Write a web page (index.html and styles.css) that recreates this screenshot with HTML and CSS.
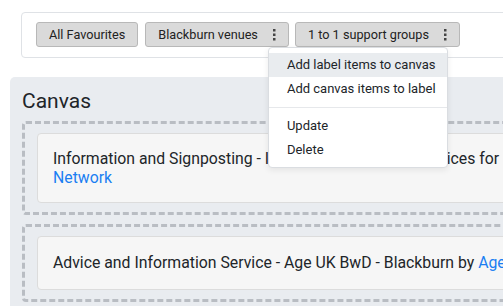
FILE: index.html
```html
<!DOCTYPE html>
<html lang="en">
<head>
  <meta charset="UTF-8" />
  <meta name="viewport" content="width=device-width, initial-scale=1.0"/>
  <title>Labels - Canvas</title>
  <link rel="stylesheet" href="styles.css">
</head>
<body>
  <div class="page">
    <div class="labels-bar">
      <button class="label-btn">All Favourites</button>
      <div class="label-wrap">
        <button class="label-btn">Blackburn venues <span class="kebab"><svg width="4" height="12" viewBox="0 0 4 12"><rect x="1" y="0" width="2.5" height="2.5"/><rect x="1" y="4.5" width="2.5" height="2.5"/><rect x="1" y="9" width="2.5" height="2.5"/></svg></span></button>
      </div>
      <div class="label-wrap">
        <button class="label-btn">1 to 1 support groups <span class="kebab"><svg width="4" height="12" viewBox="0 0 4 12"><rect x="1" y="0" width="2.5" height="2.5"/><rect x="1" y="4.5" width="2.5" height="2.5"/><rect x="1" y="9" width="2.5" height="2.5"/></svg></span></button>
        <ul class="dropdown">
          <li class="active">Add label items to canvas</li>
          <li>Add canvas items to label</li>
          <li class="divider"></li>
          <li>Update</li>
          <li>Delete</li>
        </ul>
      </div>
    </div>

    <section class="canvas">
      <h2>Canvas</h2>
      <div class="drop-zone">
        <div class="item-card">
          Information and Signposting - Information &amp; Advice Services for Blackburn by BwD Community <a href="#">Network</a>
        </div>
      </div>
      <div class="drop-zone">
        <div class="item-card">
          Advice and Information Service - Age UK BwD - Blackburn by <a href="#">Age UK Blackburn with Darwen</a>
        </div>
      </div>
    </section>
  </div>
</body>
</html>
```

FILE: styles.css
```css
* {
  box-sizing: border-box;
}

html, body {
  overflow: hidden;
}

body {
  margin: 0;
  font-family: Roboto, 'Noto Sans', sans-serif;
  color: #212529;
  background: #fff;
}

.page {
  padding: 12px 0 0 10px;
  width: 805px;
}

.labels-bar {
  margin-left: 11px;
  border: 1px solid #dfe2e6;
  border-radius: 4px;
  padding: 9px 14px;
  display: flex;
  gap: 7px;
  height: 46px;
}

.label-wrap {
  position: relative;
}

.label-btn {
  font-family: inherit;
  font-size: 12.7px;
  color: #222;
  background: #dadada;
  border: 1px solid #b8b8b8;
  border-radius: 3px;
  height: 25px;
  padding: 0 12px;
  display: flex;
  align-items: center;
  cursor: pointer;
}

.label-wrap + .label-wrap {
  margin-left: -1px;
}

.kebab {
  display: flex;
  margin-left: 14px;
  fill: #444;
}

.dropdown {
  position: absolute;
  top: 25px;
  left: -27px;
  width: 180px;
  margin: 0;
  padding: 5px 0;
  list-style: none;
  background: #fff;
  border: 1px solid #dadde1;
  border-radius: 4px;
  box-shadow: 0 2px 6px rgba(0, 0, 0, 0.08);
  z-index: 10;
  font-size: 13px;
}

.dropdown li {
  height: 24px;
  line-height: 24px;
  padding: 0 18px;
  white-space: nowrap;
  color: #212529;
}

.dropdown li.active {
  background: #e9ecef;
}

.dropdown li.divider {
  height: 1px;
  margin: 6px 0;
  padding: 0;
  background: #e6e8eb;
}

.canvas {
  margin-top: 19px;
  background: #e9ecf0;
  border-radius: 5px 0 0 0;
  padding: 12px;
  min-height: 240px;
}

.canvas h2 {
  margin: 0 0 8px;
  font-size: 21px;
  font-weight: 400;
  line-height: 24px;
}

.drop-zone {
  border: 3px dashed #b9bdc3;
  border-radius: 4px;
  padding: 9px 12px;
  margin-bottom: 9px;
}

.item-card {
  background: #f6f6f6;
  border: 1px solid #dcdcdc;
  border-radius: 4px;
  padding: 15px 15px 15px;
  font-size: 15.8px;
  line-height: 19px;
}

.drop-zone + .drop-zone .item-card {
  padding: 16px 15px 17px;
}

.item-card a {
  color: #1a7ef2;
  text-decoration: none;
}
```
